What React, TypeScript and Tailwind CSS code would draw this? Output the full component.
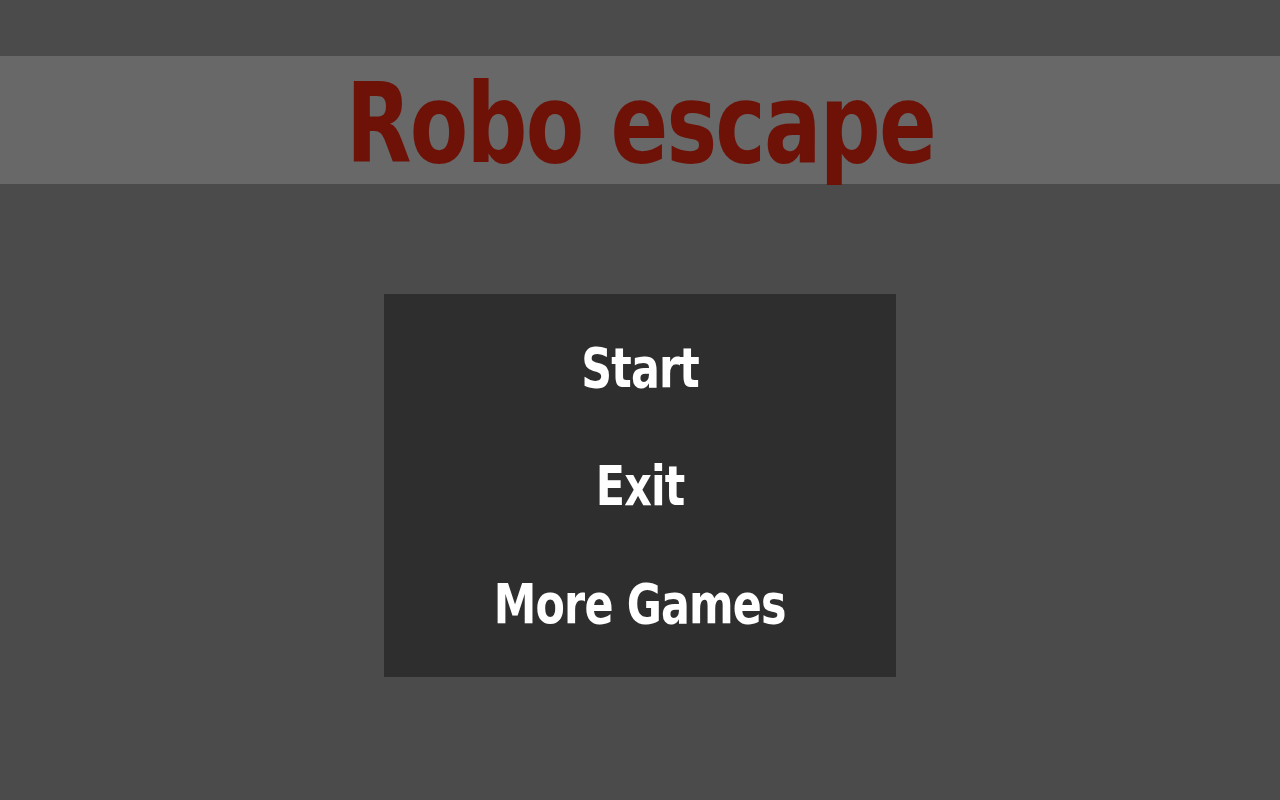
export default function App() {
  const items = ["Start", "Exit", "More Games"];
  return (
    <div
      className="w-[1280px] h-[800px] bg-[#4b4b4b] flex flex-col items-center overflow-hidden"
      style={{ fontFamily: '"DejaVu Sans Condensed", "DejaVu Sans", sans-serif' }}
    >
      <div className="mt-[56px] h-[128px] w-full bg-[#686868] flex items-center justify-center">
        <h1 className="text-[110px] font-bold leading-none text-[#6e1208] tracking-[-2px] mt-[8px] scale-x-86 whitespace-nowrap">
          Robo escape
        </h1>
      </div>
      <div className="mt-[110px] w-[512px] h-[383px] bg-[#2e2e2e] flex flex-col items-center pt-[15px]">
        {items.map((t) => (
          <button
            key={t}
            className="h-[118px] shrink-0 flex items-center justify-center text-[56px] font-bold text-white leading-none tracking-[-1px] scale-x-85 whitespace-nowrap"
          >
            {t}
          </button>
        ))}
      </div>
    </div>
  );
}
